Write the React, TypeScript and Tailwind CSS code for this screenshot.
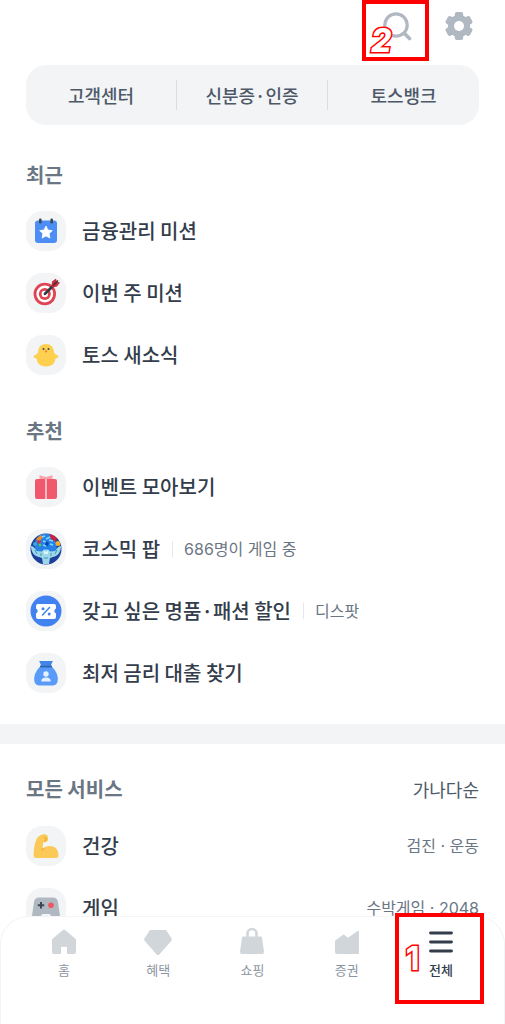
import type { ReactNode } from "react";

function SearchIcon() {
  return (
    <svg width="30" height="30" viewBox="0 0 30 30" fill="none" stroke="#b0b8c1" strokeWidth="3.2" strokeLinecap="round" aria-hidden="true">
      <circle cx="14" cy="14" r="11.2" />
      <path d="M22.300 22.300 27.500 27.500" strokeWidth="3.600" />
    </svg>
  );
}

function GearIcon() {
  return (
    <svg width="30" height="30" viewBox="0 0 30 30" aria-hidden="true">
      <g fill="#b0b8c1">
        <circle cx="15" cy="15" r="11" />
        <rect x="10.800" y="1" width="8.400" height="28" rx="2" />
        <rect x="10.800" y="1" width="8.400" height="28" rx="2" transform="rotate(60 15 15)" />
        <rect x="10.800" y="1" width="8.400" height="28" rx="2" transform="rotate(120 15 15)" />
      </g>
      <circle cx="15" cy="15" r="5" fill="#fff" />
    </svg>
  );
}

function CalendarIcon() {
  return (
    <svg viewBox="0 0 40 40" className="size-10" aria-hidden="true">
      <rect x="9" y="9.500" width="22" height="22.500" rx="3" fill="#4c8df6" />
      <rect x="13" y="7.500" width="2.600" height="5" rx="1.200" fill="#3d4654" />
      <rect x="24.400" y="7.500" width="2.600" height="5" rx="1.200" fill="#3d4654" />
      <path d="m20 15 1.900 4 4.400.6-3.200 3 .8 4.400-3.900-2.100-3.900 2.100.8-4.400-3.200-3 4.400-.6Z" fill="#fff" stroke="#fff" strokeWidth=".8" strokeLinejoin="round" />
    </svg>
  );
}

function TargetIcon() {
  return (
    <svg viewBox="0 0 40 40" className="size-10" aria-hidden="true">
      <circle cx="18.800" cy="21" r="11.200" fill="#e04452" />
      <circle cx="18.800" cy="21" r="8.400" fill="#fff" />
      <circle cx="18.800" cy="21" r="6" fill="#e04452" />
      <circle cx="18.800" cy="21" r="3.200" fill="#fff" />
      <path d="M19 20.800 28.500 11.500" stroke="#333b47" strokeWidth="2.800" strokeLinecap="round" />
      <path d="m25.500 13.500.5-5 4-3 .8 3.300 3.200.8-3 4-4.500 1Z" fill="#c92f3d" />
      <path d="m27 12.500 5-5" stroke="#3d3038" strokeWidth="1.400" />
    </svg>
  );
}

function ChickIcon() {
  return (
    <svg viewBox="0 0 40 40" className="size-10" aria-hidden="true">
      <path d="M20 9c-4.800 0-7.500 3-7.700 7-.1 2.200-1.300 3.300-3.700 4.200-1.600.7-1.200 2.300.3 2.700.9.200 1.500.4 1.900 1.200C11 29 14.500 31.500 20 31.500s9-2.500 9.200-7.400c.4-.8 1-1 1.900-1.200 1.500-.4 1.900-2 .3-2.700-2.400-.9-3.600-2-3.700-4.200C27.500 12 24.800 9 20 9Z" fill="#fdd04f" />
      <circle cx="17.500" cy="14" r="1" fill="#3d4654" />
      <circle cx="22.500" cy="14" r="1" fill="#3d4654" />
      <path d="M18.500 15.500h3L20 18Z" fill="#f2793a" />
    </svg>
  );
}

function GiftIcon() {
  return (
    <svg viewBox="0 0 40 40" className="size-10" aria-hidden="true">
      <path d="m20 12.500-6.500-.2V8.200L20 10l6.500-1.800v4.100Z" fill="#f8a3ac" />
      <rect x="9" y="12" width="22" height="20" rx="2" fill="#f0596b" />
      <path d="M19 12h2v20h-2Z" fill="#fbb9c0" />
    </svg>
  );
}

function CosmicIcon() {
  return (
    <svg viewBox="0 0 40 40" className="size-10" aria-hidden="true">
      <clipPath id="cosmic-disc">
        <circle cx="20" cy="20" r="15.500" />
      </clipPath>
      <g clipPath="url(#cosmic-disc)">
        <path d="M0 0h40v40H0Z" fill="#1b3f9a" />
        <path d="M9 12 14 5h9l7 6 1 10-11 4-11-4Z" fill="#2680e8" />
        <path d="m23 4 8 4-1 5-5-3Z" fill="#c9203c" />
        <path d="m10 10 5-4 2 2-4 5Z" fill="#f08a24" />
        <circle cx="32" cy="14.500" r="2.500" fill="#efb02e" />
        <circle cx="13" cy="13" r="1.800" fill="#d72f3b" />
        <circle cx="9" cy="15" r="2" fill="#35a9d8" />
        <circle cx="14" cy="16" r="1.400" fill="#4ec46b" />
        <path d="m16 8 3-1m1 3 4-2m-7 4 3 1m3-2 4 1m-10 4 3 1m4-2 3 1" stroke="#75dcff" strokeWidth="1.800" fill="none" />
        <path d="m20 12 3 2-1 3-3-1Z" fill="#0c45b7" />
        <path d="M5 17c3 0 4 3 6 5l5 .5 2-2h4l2 2 5-.5c2-2 3-5 6-5 0 6-3 10-8 11l-3 1-1 6h-6l-1-6-3-1c-5-1-8-5-8-11Z" fill="#9bd7e6" />
        <path d="m9 21 2 4m4-1v3m16-6-2 4m-4-1v3m-7 2h4" stroke="#4a93b8" strokeWidth="1" fill="none" />
        <path d="m17.500 21 2.500 2 2.500-2-.5 4h-4Z" fill="#d9f5fb" />
      </g>
    </svg>
  );
}

function CouponIcon() {
  return (
    <svg viewBox="0 0 40 40" className="size-10" aria-hidden="true">
      <circle cx="20" cy="20" r="15.500" fill="#4281f0" />
      <path d="M12 13h16a2 2 0 0 1 2 2v2.500a2.700 2.700 0 0 0 0 5V26a2 2 0 0 1-2 2H12a2 2 0 0 1-2-2v-3.500a2.700 2.700 0 0 0 0-5V15a2 2 0 0 1 2-2Z" fill="#fff" />
      <path d="m23.500 16.500-7 7.500" stroke="#4281f0" strokeWidth="1.500" strokeLinecap="round" />
      <circle cx="17" cy="17.800" r="1.500" fill="#4281f0" />
      <circle cx="23.200" cy="23" r="1.500" fill="#4281f0" />
    </svg>
  );
}

function MoneyBagIcon() {
  return (
    <svg viewBox="0 0 40 40" className="size-10" aria-hidden="true">
      <path d="M15 13h10c4 3.500 6.800 8 6.800 13 0 4.500-2 6.500-5.800 6.500H14c-3.800 0-5.800-2-5.800-6.500 0-5 2.800-9.500 6.800-13Z" fill="#5a9af8" />
      <path d="M13.200 8h13.600l-2 4.500h-9.600Z" fill="#4284e8" />
      <rect x="14" y="12.300" width="12" height="2.200" rx="1" fill="#2866bd" />
      <circle cx="20" cy="21" r="2.700" fill="#e4f1ff" />
      <path d="M15.300 28.500c0-3 2-4 4.700-4s4.700 1 4.700 4Z" fill="#e4f1ff" />
    </svg>
  );
}

function ArmIcon() {
  return (
    <svg viewBox="0 0 40 40" className="size-10" aria-hidden="true">
      <path d="M10.500 13c1-2.500 5-4.800 8-4.800 2 0 3.500 1.500 3.500 3.800v1.800c0 1.600-1.500 2.700-3.200 2.500l-1.500-.2-.8 6.700c2-1.800 4.500-2.800 7.500-2.800 5.500 0 8.500 4 8.500 9.500 0 1.600-1 2.500-2.500 2.500H10.500c-2 0-3-1-2.900-3 .2-6 .9-11.500 2.900-16Z" fill="#fbc957" />
      <path d="m16.500 22-.7 2.500 3-2.500" fill="none" stroke="#eaa735" strokeWidth=".8" />
      <path d="M18 12c1.500-1 3 .5 2 2l-2 1.500" fill="none" stroke="#eaa735" strokeWidth="1" />
    </svg>
  );
}

function GamepadIcon() {
  return (
    <svg viewBox="0 0 40 40" className="size-10" aria-hidden="true">
      <path d="M13 9.500h14c3 0 4.500 1.500 5 4.500l2 14c.5 4-1 6-3.500 6S26 31 25 28c-.5-1.500-1-2-2.500-2h-5c-1.500 0-2 .5-2.500 2-1 3-3 6-5.500 6S5.500 32 6 28l2-14c.5-3 2-4.500 5-4.500Z" fill="#b0b8c1" />
      <path d="M15 14v6.400m-3.200-3.200h6.400" stroke="#3d4654" strokeWidth="2" />
      <circle cx="25" cy="17.200" r="2.800" fill="#f05662" />
    </svg>
  );
}

type Item = { label: string; icon: ReactNode; note?: string };

const recent: Item[] = [
  { label: "금융관리 미션", icon: <CalendarIcon /> },
  { label: "이번 주 미션", icon: <TargetIcon /> },
  { label: "토스 새소식", icon: <ChickIcon /> },
];

const recommended: Item[] = [
  { label: "이벤트 모아보기", icon: <GiftIcon /> },
  { label: "코스믹 팝", icon: <CosmicIcon />, note: "686명이 게임 중" },
  { label: "갖고 싶은 명품·패션 할인", icon: <CouponIcon />, note: "디스팟" },
  { label: "최저 금리 대출 찾기", icon: <MoneyBagIcon /> },
];

const services: Item[] = [
  { label: "건강", icon: <ArmIcon />, note: "검진 · 운동" },
  { label: "게임", icon: <GamepadIcon />, note: "수박게임 · 2048" },
];

const tabs = [
  {
    label: "홈",
    icon: <path d="M3.500 11 12.600 3.200a2 2 0 0 1 2.800 0L24.500 11a2.500 2.500 0 0 1 1.500 2.200V25a2 2 0 0 1-2 2h-7v-6a1.200 1.200 0 0 0-1.200-1.200h-3.600A1.200 1.200 0 0 0 11 21v6H4a2 2 0 0 1-2-2V13.200A2.500 2.500 0 0 1 3.500 11Z" />,
  },
  {
    label: "혜택",
    icon: <path d="M7 3h14a2 2 0 0 1 1.600.8l5 7.800a2 2 0 0 1-.2 2.200L15.300 27.500a1.700 1.700 0 0 1-2.600 0L.6 13.800a2 2 0 0 1-.2-2.200l5-7.800A2 2 0 0 1 7 3Z" />,
  },
  {
    label: "쇼핑",
    icon: (
      <>
        <path d="M5.500 9.500h17a1.500 1.500 0 0 1 1.500 1.300l2 14a2 2 0 0 1-2 2.200H4a2 2 0 0 1-2-2.200l2-14a1.500 1.500 0 0 1 1.500-1.300Z" />
        <path d="M9.500 11V6.500a4.500 4.500 0 0 1 9 0V11" fill="none" stroke="currentColor" strokeWidth="2.600" />
      </>
    ),
  },
  {
    label: "증권",
    icon: <path d="M2 14.500a2 2 0 0 1 .8-1.600l7-5a1.500 1.500 0 0 1 1.800 0l3.200 2.800 9.500-6.500A1 1 0 0 1 26 5.200V26a1 1 0 0 1-1 1H4a2 2 0 0 1-2-2Z" />,
  },
];

function SectionTitle({ children }: { children: ReactNode }) {
  return <h2 className="text-xl leading-8 font-bold text-[#6b7684]">{children}</h2>;
}

function ServiceRow({ item, spread = false }: { item: Item; spread?: boolean }) {
  return (
    <li>
      <a href="#" className="flex h-[62px] items-center">
        <span className="mr-4 shrink-0 rounded-2xl bg-[#f2f4f6]">{item.icon}</span>
        <span className="text-xl leading-[30px] font-medium text-[#333d4b]">{item.label}</span>
        {item.note && !spread && <span className="mr-[11px] ml-3 h-4 w-px bg-[#e5e8eb]" />}
        {item.note && (
          <span
            className={
              spread
                ? "ml-auto font-[Inter,'Noto_Sans_CJK_KR',sans-serif] text-base text-[#6b7684]"
                : "font-[Inter,'Noto_Sans_CJK_KR',sans-serif] text-base text-[#6b7684]"
            }
          >
            {item.note}
          </span>
        )}
      </a>
    </li>
  );
}

function ServiceList({ items, spread }: { items: Item[]; spread?: boolean }) {
  return (
    <ul>
      {items.map((item) => (
        <ServiceRow key={item.label} item={item} spread={spread} />
      ))}
    </ul>
  );
}

export default function App() {
  return (
    <div className="h-screen overflow-hidden bg-white font-['Noto_Sans_CJK_KR',sans-serif]">
      <header className="flex h-[65px] items-start justify-end gap-8 px-[31px] pt-[11px]">
        <button type="button" aria-label="검색" className="relative">
          <SearchIcon />
          <span className="pointer-events-none absolute -top-[11px] -left-5 h-[61px] w-[67px] border-4 border-[#ff0000]" />
          <span className="pointer-events-none absolute top-3 -left-[11px] font-[Inter,sans-serif] text-[32px] leading-9 font-extrabold text-white italic [paint-order:stroke_fill] [-webkit-text-stroke:3px_#ff0000]">2</span>
        </button>
        <button type="button" aria-label="설정">
          <GearIcon />
        </button>
      </header>

      <main>
        <nav aria-label="바로가기" className="mx-[26px] grid h-[60px] grid-cols-3 items-center divide-x divide-[#d9dee3] rounded-[20px] bg-[#f2f4f6] text-center text-lg font-medium text-[#4e5968]">
          <a href="#" className="leading-[30px]">고객센터</a>
          <a href="#" className="leading-[30px]">신분증·인증</a>
          <a href="#" className="leading-[30px]">토스뱅크</a>
        </nav>

        <section className="px-[26px] pt-[34px]">
          <SectionTitle>최근</SectionTitle>
          <div className="pt-[9px]">
            <ServiceList items={recent} />
          </div>
        </section>

        <section className="px-[26px] pt-[29px] pb-5">
          <SectionTitle>추천</SectionTitle>
          <div className="pt-[9px]">
            <ServiceList items={recommended} />
          </div>
        </section>

        <div className="h-5 bg-[#f2f4f6]" />

        <section className="px-[26px] pt-[29px]">
          <div className="flex items-center justify-between">
            <SectionTitle>모든 서비스</SectionTitle>
            <button type="button" className="text-lg leading-8 text-[#4e5968]">가나다순</button>
          </div>
          <div className="pt-[10px]">
            <ServiceList items={services} spread />
          </div>
        </section>
      </main>

      <nav aria-label="메뉴" className="fixed inset-x-0 bottom-0 grid h-[108px] grid-cols-5 items-start rounded-t-[28px] border border-b-0 border-[#f2f4f6] bg-white px-4 pt-[10px]">
        {tabs.map((tab) => (
          <a key={tab.label} href="#" className="flex flex-col items-center gap-[5px] text-[#d1d6db]">
            <svg width="28" height="28" viewBox="0 0 28 28" fill="currentColor" aria-hidden="true">{tab.icon}</svg>
            <span className="text-[13px] leading-5 text-[#8b95a1]">{tab.label}</span>
          </a>
        ))}
        <a href="#" aria-current="page" className="relative flex flex-col items-center gap-[5px] text-[#333d4b]">
          <svg width="28" height="28" viewBox="0 0 28 28" fill="none" stroke="currentColor" strokeWidth="2.800" strokeLinecap="round" aria-hidden="true">
            <path d="M3.500 6h21M3.500 15h21M3.500 24h21" />
          </svg>
          <span className="text-[13px] leading-5 font-medium">전체</span>
          <span className="pointer-events-none absolute -top-[14px] left-px h-[91px] w-[89px] border-4 border-[#ff0000]" />
          <span className="pointer-events-none absolute top-[14px] left-3 font-[Inter,sans-serif] text-[32px] leading-9 font-bold text-white [paint-order:stroke_fill] [-webkit-text-stroke:3px_#ff0000]">1</span>
        </a>
      </nav>
    </div>
  );
}
